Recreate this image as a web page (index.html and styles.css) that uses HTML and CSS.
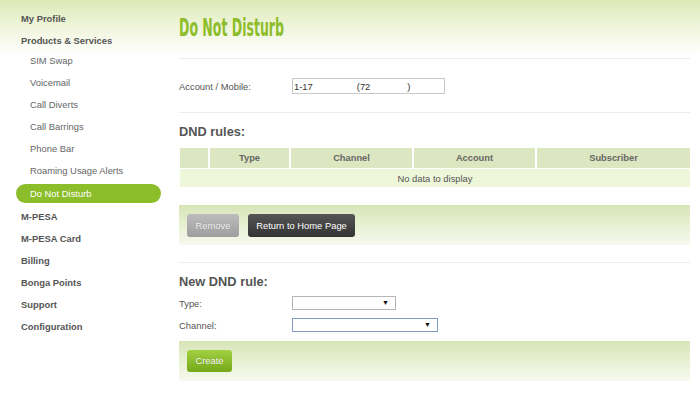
FILE: index.html
```html
<!DOCTYPE html>
<html>
<head>
<meta charset="utf-8">
<title>Do Not Disturb</title>
<link rel="stylesheet" href="styles.css">
</head>
<body>
<div class="page">
  <nav class="sidebar">
    <ul class="menu">
      <li class="top">My Profile</li>
      <li class="top">Products &amp; Services</li>
      <li class="sub-group">
        <ul class="submenu">
          <li>SIM Swap</li>
          <li>Voicemail</li>
          <li>Call Diverts</li>
          <li>Call Barrings</li>
          <li>Phone Bar</li>
          <li>Roaming Usage Alerts</li>
          <li class="active"><span class="pill">Do Not Disturb</span></li>
        </ul>
      </li>
      <li class="top">M-PESA</li>
      <li class="top">M-PESA Card</li>
      <li class="top">Billing</li>
      <li class="top">Bonga Points</li>
      <li class="top">Support</li>
      <li class="top">Configuration</li>
    </ul>
  </nav>
  <main class="main">
    <section class="sec sec-title">
      <h1 class="title">Do Not Disturb</h1>
    </section>
    <section class="sec sec-account">
      <div class="row">
        <label class="label">Account / Mobile:</label>
        <div class="input"><span>1-17</span><span class="gap1">(72</span><span class="gap2">)</span></div>
      </div>
    </section>
    <section class="sec sec-rules">
      <h2 class="heading">DND rules:</h2>
      <table class="grid">
        <colgroup>
          <col class="c0"><col class="c1"><col class="c2"><col class="c3"><col class="c4">
        </colgroup>
        <thead>
          <tr><th></th><th>Type</th><th>Channel</th><th>Account</th><th>Subscriber</th></tr>
        </thead>
        <tbody>
          <tr><td colspan="5" class="empty">No data to display</td></tr>
        </tbody>
      </table>
      <div class="bar">
        <button class="btn btn-gray">Remove</button>
        <button class="btn btn-dark">Return to Home Page</button>
      </div>
    </section>
    <section class="sec sec-new">
      <h2 class="heading">New DND rule:</h2>
      <div class="frow">
        <span class="label">Type:</span>
        <div class="select sel-type"><span class="arrow">&#9660;</span></div>
      </div>
      <div class="frow">
        <span class="label">Channel:</span>
        <div class="select sel-channel focus"><span class="arrow">&#9660;</span></div>
      </div>
      <div class="bar bar-create">
        <button class="btn btn-green">Create</button>
      </div>
    </section>
  </main>
</div>
</body>
</html>
```
FILE: styles.css
```css
html, body {
  margin: 0;
  padding: 0;
}
body {
  width: 700px;
  height: 405px;
  overflow: hidden;
  font-family: "Liberation Sans", Arial, sans-serif;
  font-size: 9.4px;
  color: #555;
  background: linear-gradient(to bottom, #dde9b6 0px, #eef4d8 25px, #ffffff 55px) no-repeat;
  background-size: 100% 60px;
  background-color: #fff;
}
.page {
  display: flex;
}
.sidebar {
  width: 179px;
  flex: none;
}
.menu, .submenu {
  list-style: none;
  margin: 0;
  padding: 0;
}
.menu {
  padding-top: 8px;
}
.top {
  height: 22px;
  line-height: 22px;
  padding-left: 21px;
  font-weight: bold;
  color: #555;
}
.submenu {
  margin-top: -2px;
}
.submenu li {
  height: 22px;
  line-height: 22px;
  padding-left: 30px;
  color: #666;
}
.submenu li.active {
  padding-left: 16px;
}
.pill {
  display: block;
  width: 131px;
  height: 19px;
  line-height: 19px;
  margin-top: 2px;
  padding-left: 14px;
  border-radius: 10px;
  background: #8cbd2b;
  color: #fff;
}
.main {
  width: 511px;
  flex: none;
}
.sec {
  border-bottom: 1px solid #ececec;
}
.sec:last-child {
  border-bottom: none;
}
.sec-title {
  padding: 16px 0 17px;
  height: 25px;
}
.title {
  margin: 0;
  font-family: "DejaVu Sans Condensed", "Liberation Sans", sans-serif;
  font-weight: bold;
  font-size: 24px;
  line-height: 25px;
  color: #8dbd2a;
  display: inline-block;
  white-space: nowrap;
  transform: scaleX(0.58);
  transform-origin: left center;
}
.sec-account {
  padding: 19px 0 18px;
}
.row, .frow {
  display: flex;
  align-items: center;
}
.row {
  height: 16px;
}
.label {
  width: 113px;
  flex: none;
  color: #555;
}
.input {
  width: 151px;
  height: 14px;
  border: 1px solid #c8c8c8;
  display: flex;
  align-items: center;
  padding: 0;
  color: #333;
}
.input span:first-child {
  padding-left: 1px;
}
.gap1 {
  margin-left: 44px;
}
.gap2 {
  margin-left: 37px;
}
.sec-rules {
  padding: 11px 0 17px;
}
.heading {
  margin: 0;
  font-size: 12.8px;
  line-height: 16px;
  font-weight: bold;
  color: #555;
}
.grid {
  margin-top: 8px;
  margin-left: 1px;
  width: 510px;
  table-layout: fixed;
  border-collapse: collapse;
}
.c0 { width: 29px; }
.c1 { width: 81px; }
.c2 { width: 123px; }
.c3 { width: 123px; }
.c4 { width: 154px; }
.grid th {
  height: 20px;
  padding: 0;
  background: #dce6c0;
  color: #666;
  font-weight: bold;
  font-size: 9.3px;
  border-left: 2px solid #fff;
  border-bottom: 1px solid #fff;
}
.grid th:first-child {
  border-left: none;
}
.grid td.empty {
  height: 18px;
  padding: 0;
  background: #eff7da;
  text-align: center;
  color: #555;
}
.bar {
  margin-top: 18px;
  height: 40px;
  padding: 9px 8px 0;
  box-sizing: border-box;
  display: flex;
  align-items: flex-start;
  gap: 9px;
  background: linear-gradient(to bottom, #d7e5b8 0%, #e8f0d3 50%, #f6f9ee 100%);
}
.btn {
  font-family: "Liberation Sans", Arial, sans-serif;
  font-size: 9.4px;
  border: none;
  border-radius: 3px;
  padding: 0;
  margin: 0;
  height: 23px;
  line-height: 23px;
  cursor: pointer;
}
.btn-gray {
  width: 52px;
  background: linear-gradient(to bottom, #bcbcbc, #9e9e9e);
  color: #f2f2f2;
  text-shadow: 0 0 1px #888;
}
.btn-dark {
  width: 107px;
  background: linear-gradient(to bottom, #555, #333);
  color: #fff;
}
.sec-new {
  padding: 11px 0 0;
}
.sec-new .heading {
  margin-bottom: 2px;
}
.frow {
  height: 22px;
}
.select {
  height: 12px;
  border: 1px solid #b5b5b5;
  background: #fff;
  display: flex;
  align-items: center;
  justify-content: flex-end;
  box-sizing: content-box;
}
.sel-type {
  width: 102px;
}
.sel-channel {
  width: 144px;
  border-color: #7f9dc6;
}
.arrow {
  font-size: 7px;
  color: #111;
  margin-right: 6px;
  line-height: 8px;
}
.bar-create {
  margin-top: 5px;
  padding-top: 9px;
}
.btn-green {
  width: 45px;
  height: 22px;
  line-height: 22px;
  background: linear-gradient(to bottom, #a2d142, #74a81a);
  color: #fff;
  text-shadow: 0 0 1px #5b8a10;
}
```
